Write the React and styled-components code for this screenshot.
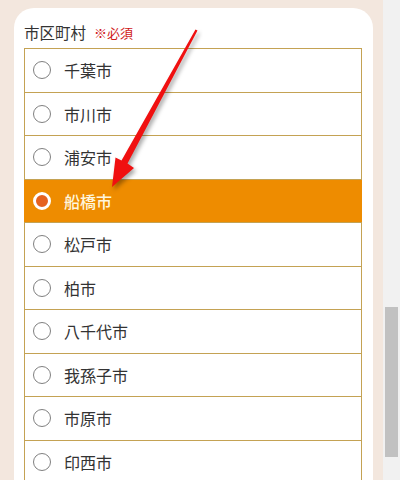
import React from 'react'
import styled, { createGlobalStyle } from 'styled-components'

const GlobalStyle = createGlobalStyle`
  html, body {
    margin: 0;
    padding: 0;
    height: 480px;
    overflow: hidden;
    background: #f3e7de;
    font-family: "Noto Sans CJK JP", "Noto Sans", sans-serif;
  }
`

const Page = styled.div`
  display: flex;
  height: 480px;
`

const Main = styled.div`
  position: relative;
  flex: 1;
  padding: 8px 10px 0 14px;
`

const Card = styled.div`
  background: #ffffff;
  border-radius: 20px 20px 0 0;
  padding: 11px 11px 0 10px;
  height: 600px;
`

const Label = styled.div`
  display: flex;
  align-items: center;
  gap: 8px;
  height: 26px;
  margin-bottom: 3px;
  font-size: 15.5px;
  color: #333;
`

const Required = styled.span`
  font-size: 13px;
  color: #d01818;
`

const List = styled.div`
  border: 1px solid #c4a253;
  border-bottom: 0;
`

const Row = styled.label`
  display: flex;
  align-items: center;
  gap: 13px;
  box-sizing: border-box;
  height: 43.5px;
  border-bottom: 1px solid #c4a253;
  background: ${(p) => (p.$checked ? '#ee8c00' : '#fff')};
  color: ${(p) => (p.$checked ? '#fff6dc' : '#333')};
  font-size: 16px;
  font-weight: ${(p) => (p.$checked ? 500 : 400)};
  margin: ${(p) => (p.$checked ? '0 -1px' : '0')};
  padding-left: ${(p) => (p.$checked ? '9px' : '8px')};
`

const Radio = styled.span`
  box-sizing: border-box;
  width: 18px;
  height: 18px;
  border-radius: 50%;
  border: ${(p) => (p.$checked ? '3.5px solid #fff' : '1.3px solid #808080')};
  background: ${(p) => (p.$checked ? '#e5621f' : '#fff')};
  flex-shrink: 0;
`

const Arrow = styled.svg`
  position: absolute;
  left: 0;
  top: 0;
  overflow: visible;
  filter: drop-shadow(2px 3px 2px rgba(0, 0, 0, 0.35));
`

const Scrollbar = styled.div`
  width: 17px;
  background: #f1f1f1;
  padding: 307px 2px 0 2px;
  box-sizing: border-box;
`

const Thumb = styled.div`
  height: 150px;
  background: #c1c1c1;
`

const cities = ['千葉市', '市川市', '浦安市', '船橋市', '松戸市', '柏市', '八千代市', '我孫子市', '市原市', '印西市']

export default function App() {
  const selected = '船橋市'
  return (
    <Page>
      <GlobalStyle />
      <Main>
        <Card>
          <Label>
            市区町村<Required>※必須</Required>
          </Label>
          <List>
            {cities.map((c) => (
              <Row key={c} $checked={c === selected}>
                <Radio $checked={c === selected} />
                {c}
              </Row>
            ))}
          </List>
        </Card>
        <Arrow width="400" height="480" viewBox="0 0 400 480">
          <polygon
            fill="#f01010"
            points="197.5,30.5 195.5,29.5 121.5,160.5 115.5,157.5 112,187 134,168 127.5,163.5"
          />
        </Arrow>
      </Main>
      <Scrollbar>
        <Thumb />
      </Scrollbar>
    </Page>
  )
}
